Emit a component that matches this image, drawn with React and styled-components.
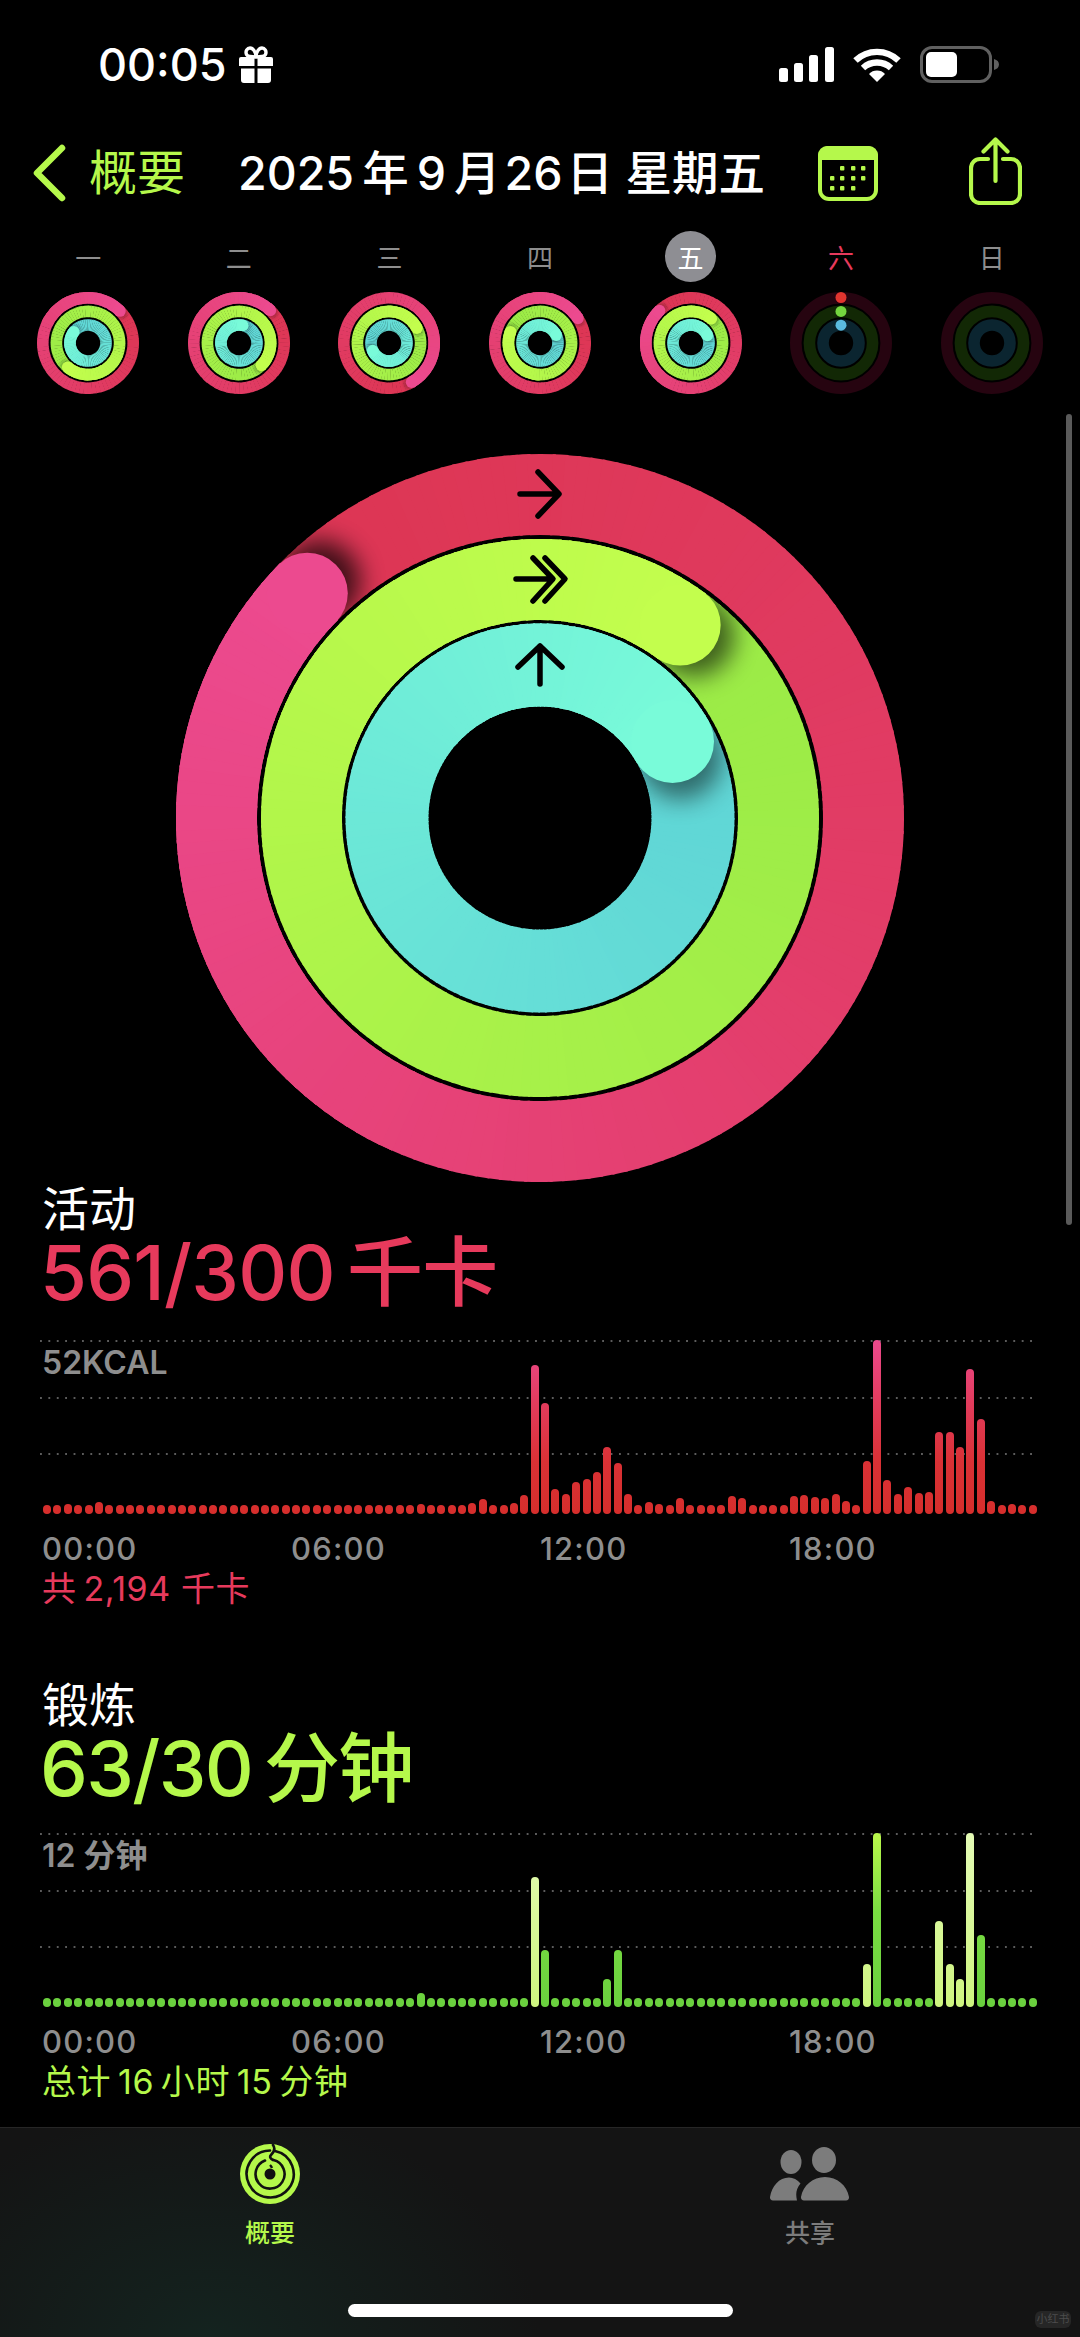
import { useId } from "react"
import styled, { createGlobalStyle } from "styled-components"

const GREEN = "#B5F84B"
const RED = "#E73A5C"
const GREY = "#8E8E8E"
const SANS = `Inter, "Noto Sans CJK SC", sans-serif`

const GlobalStyle = createGlobalStyle`
  html, body {
    margin: 0;
    padding: 0;
    background: #000;
    font-family: ${SANS};
  }
`

const Page = styled.div`
  position: relative;
  width: 1080px;
  height: 2337px;
  overflow: hidden;
  display: flex;
  flex-direction: column;
  background: #000;
  color: #fff;
`
const Content = styled.div`
  flex: 1;
  min-height: 0;
`
const StatusBar = styled.div`
  height: 128px;
  padding: 0 81px 0 98px;
  box-sizing: border-box;
  display: flex;
  align-items: center;
  justify-content: space-between;
`
const StatusLeft = styled.div`
  display: flex;
  align-items: center;
  gap: 12px;
`
const Time = styled.span`
  font-size: 45px;
  line-height: 1;
  font-weight: 500;
`
const StatusRight = styled.div`
  display: flex;
  align-items: center;
  gap: 19px;
`
const Nav = styled.div`
  height: 90px;
  padding-left: 31px;
  display: flex;
  align-items: center;
`
const BackLabel = styled.span`
  margin-left: 22px;
  width: 149px;
  font-size: 48px;
  color: ${GREEN};
  line-height: 1;
`
const DateTitle = styled.span`
  width: 580px;
  font-size: 46.5px;
  font-weight: 500;
  line-height: 1;
  white-space: pre;
`
const ShareButton = styled.span`
  display: flex;
  margin: 0 0 5px 91px;
`
const WeekRow = styled.div`
  margin-top: 13px;
  padding: 0 13px;
  display: grid;
  grid-template-columns: repeat(7, 1fr);
`
const Day = styled.div`
  display: flex;
  flex-direction: column;
  align-items: center;
  gap: 10px;
`
const DayLabel = styled.span`
  width: 51px;
  height: 51px;
  border-radius: 50%;
  display: flex;
  align-items: center;
  justify-content: center;
  font-size: 26px;
  background: ${p => (p.$today ? "#8E8E93" : "transparent")};
  color: ${p => (p.$today ? "#fff" : p.$weekend ? RED : GREY)};
`
const Hero = styled.div`
  margin-top: 60px;
  display: flex;
  justify-content: center;
`
const Section = styled.section`
  height: 496px;
  padding-left: 42px;
  &:first-of-type {
    margin-top: 2px;
  }
`
const SectionTitle = styled.div`
  font-size: 47px;
  line-height: 50px;
`
const BigValue = styled.div`
  margin-left: -2px;
  font-size: 76px;
  line-height: 76px;
  font-weight: 500;
  letter-spacing: ${p => p.$track}px;
  color: ${p => p.$color};
  white-space: pre;
`
const ChartArea = styled.div`
  position: relative;
  margin: ${p => p.$gap}px 0 0 -2px;
  width: 996px;
  height: 174px;
`
const GridLines = styled.div`
  position: absolute;
  inset: 0 0 auto 0;
  height: 115px;
  display: flex;
  flex-direction: column;
  justify-content: space-between;
`
const GridLine = styled.div`
  height: 2px;
  background-image: linear-gradient(to right, #5c5c5c 2px, transparent 2px);
  background-size: 8.4px 2px;
`
const ChartValue = styled.span`
  position: absolute;
  left: 2px;
  top: 5px;
  font-size: 32px;
  line-height: 36px;
  font-weight: 600;
  color: ${GREY};
`
const Bars = styled.div`
  position: relative;
  height: 100%;
  margin: 0 -1px 0 3px;
  display: flex;
  align-items: flex-end;
  justify-content: space-between;
`
const barFill = {
  red: "linear-gradient(to top, #D62E2C, #DA3135 30%, #E23C5E 65%, #EC4A8E)",
  green: "linear-gradient(to top, #6AD03E, #7ADD42 55%, #BAF84B)",
  pale: "linear-gradient(to top, #CEF57F, #E4FBB5)",
}
const Bar = styled.div`
  width: 8px;
  border-radius: 4px;
  background-image: ${p => barFill[p.$tone]};
  background-size: 100% 174px;
  background-position: bottom;
  background-repeat: no-repeat;
`
const TimeAxis = styled.div`
  margin-top: 17px;
  display: flex;
`
const TimeTick = styled.span`
  width: 249px;
  font-size: 31px;
  line-height: 36px;
  letter-spacing: 1.2px;
  font-weight: 500;
  color: ${GREY};
`
const Total = styled.div`
  margin-top: 2px;
  font-size: 34px;
  line-height: 40px;
  letter-spacing: 0.6px;
  color: ${p => p.$color};
  white-space: pre;
`
const TabBar = styled.div`
  height: 210px;
  flex: none;
  display: flex;
  flex-direction: column;
  box-sizing: border-box;
  border-top: 1px solid #262626;
  background:
    radial-gradient(ellipse 330px 230px at 210px 100%, #14231f 0%, rgba(20, 35, 31, 0) 100%),
    #141414;
`
const Tabs = styled.div`
  padding-top: 16px;
  display: grid;
  grid-template-columns: 1fr 1fr;
`
const Tab = styled.div`
  display: flex;
  flex-direction: column;
  align-items: center;
  color: ${p => (p.$active ? GREEN : "#7C7C7C")};
`
const TabIcon = styled.div`
  height: 60px;
  display: flex;
  align-items: center;
`
const TabLabel = styled.span`
  margin-top: 12px;
  font-size: 25px;
  line-height: 34px;
  font-weight: 500;
`
const HomeIndicator = styled.div`
  margin-top: 54px;
  align-self: center;
  width: 385px;
  height: 13px;
  border-radius: 7px;
  background: #fff;
`
const Scrollbar = styled.div`
  position: absolute;
  left: 1066px;
  top: 414px;
  width: 6px;
  height: 811px;
  border-radius: 3px;
  background: #5a5a5a;
`
const Watermark = styled.span`
  position: absolute;
  right: 9px;
  bottom: 9px;
  width: 36px;
  height: 17px;
  border-radius: 6px;
  background: #262626;
  color: #4c4c4c;
  font-size: 11px;
  line-height: 17px;
  text-align: center;
`

const point = (deg, r) => {
  const a = (deg * Math.PI) / 180
  return [r * Math.sin(a), -r * Math.cos(a)]
}
const mix = (a, b, t) => {
  const c = [1, 3, 5].map(i => {
    const x = parseInt(a.slice(i, i + 2), 16)
    const y = parseInt(b.slice(i, i + 2), 16)
    return Math.round(x + (y - x) * t)
  })
  return `rgb(${c.join(",")})`
}

const Arc = ({ r, width, start, sweep, color }) => {
  const [x0, y0] = point(start, r)
  const [x1, y1] = point(start + sweep, r)
  return <path d={`M${x0} ${y0}A${r} ${r} 0 0 1 ${x1} ${y1}`} fill="none" stroke={color} strokeWidth={width} />
}

const COLORS = {
  red: ["#DD3654", "#EC4A8F"],
  green: ["#9BEB47", "#C3FE4D"],
  cyan: ["#5FD5D6", "#79FBD9"],
}

// one progress ring: colour runs clockwise from just past the cap round to the cap
const Ring = ({ r, width, end, tone, steps, id, shade }) => {
  const [from, to] = COLORS[tone]
  const outer = r + width / 2
  const inner = r - width / 2
  const step = 360 / steps
  const parts = Array.from({ length: steps }, (_, i) => (
    <Arc key={i} r={r} width={width} start={end + i * step} sweep={step + 0.5} color={mix(from, to, Math.pow(i / (steps - 1), 1.3))} />
  ))
  const [cx, cy] = point(end, r)
  const nudge = ((width * 0.22) / r) * (180 / Math.PI)
  const [sx, sy] = point(end + nudge, r)
  const clip = `M${-outer} 0A${outer} ${outer} 0 1 0 ${outer} 0A${outer} ${outer} 0 1 0 ${-outer} 0Z
    M${-inner} 0A${inner} ${inner} 0 1 0 ${inner} 0A${inner} ${inner} 0 1 0 ${-inner} 0Z`
  return (
    <g>
      <defs>
        <clipPath id={`${id}c`}>
          <path d={clip} clipRule="evenodd" />
        </clipPath>
        <filter id={`${id}b`} x="-60%" y="-60%" width="220%" height="220%">
          <feGaussianBlur stdDeviation={width * 0.15} />
        </filter>
      </defs>
      {parts}
      <g clipPath={`url(#${id}c)`}>
        <circle cx={sx} cy={sy} r={width / 2} fill="#000" opacity={shade} filter={`url(#${id}b)`} />
      </g>
      {parts.slice(Math.floor(steps * 0.7))}
      <circle cx={cx} cy={cy} r={width / 2} fill={to} />
    </g>
  )
}

const HeroRings = () => {
  const id = useId()
  return (
    <svg width="728" height="728" viewBox="-364 -364 728 728">
      <Ring id={`${id}r`} r={323.5} width={81} end={314} tone="red" steps={180} shade={0.72} />
      <Ring id={`${id}g`} r={238.5} width={81} end={36} tone="green" steps={180} shade={0.6} />
      <Ring id={`${id}y`} r={153} width={83} end={60} tone="cyan" steps={180} shade={0.5} />
      <g fill="none" stroke="#000" strokeWidth="5.5" strokeLinecap="round" strokeLinejoin="round">
        <path d="M-20 -324H17M-2 -346L19 -324L-2 -302" />
        <path d="M-24 -239H11M-7 -260L13 -239L-7 -217M5 -260L25 -239L5 -217" />
        <path d="M0 -134V-172M-22 -151L0 -172L22 -151" />
      </g>
    </svg>
  )
}

const MiniRings = ({ ends, id }) => (
  <svg width="102" height="102" viewBox="-51 -51 102 102">
    <Ring id={`${id}r`} r={45.2} width={11.6} end={ends[0]} tone="red" steps={72} shade={0.22} />
    <Ring id={`${id}g`} r={31.6} width={11.6} end={ends[1]} tone="green" steps={72} shade={0.22} />
    <Ring id={`${id}y`} r={18} width={11.6} end={ends[2]} tone="cyan" steps={72} shade={0.22} />
  </svg>
)

const EmptyRings = ({ dots }) => (
  <svg width="102" height="102" viewBox="-51 -51 102 102" fill="none">
    <circle r={45.2} stroke="#260410" strokeWidth="11.6" />
    <circle r={31.6} stroke="#122805" strokeWidth="11.6" />
    <circle r={18} stroke="#0B2530" strokeWidth="11.6" />
    {dots && (
      <>
        <circle cy={-45.5} r="5.5" fill="#E0352F" />
        <circle cy={-31.6} r="5.5" fill="#74D53F" />
        <circle cy={-17.8} r="5.5" fill="#5ABBE0" />
      </>
    )}
  </svg>
)

const GiftIcon = () => (
  <svg width="34" height="37" viewBox="0 0 34 37">
    <path d="M17 11C14 11 8.5 11 7.5 8.5C6 5 8.5 2 11 2C14 2 17 6 17 11C17 6 20 2 23 2C25.5 2 28 5 26.5 8.5C25.5 11 20 11 17 11Z" fill="none" stroke="#fff" strokeWidth="3.4" />
    <path d="M2 11H15.5V20H0V13A2 2 0 0 1 2 11ZM18.5 11H32A2 2 0 0 1 34 13V20H18.5ZM2 22.5H15.5V37H5A3 3 0 0 1 2 34ZM18.5 22.5H32V34A3 3 0 0 1 29 37H18.5Z" fill="#fff" />
  </svg>
)
const SignalIcon = () => (
  <svg width="55" height="35" viewBox="0 0 55 35" fill="#fff">
    <rect x="0" y="21" width="9" height="14" rx="2.5" />
    <rect x="15" y="16" width="9" height="19" rx="2.5" />
    <rect x="30" y="8" width="9" height="27" rx="2.5" />
    <rect x="46" y="0" width="9" height="35" rx="2.5" />
  </svg>
)
const WifiIcon = () => (
  <svg width="48" height="35" viewBox="0 0 48 35" fill="none" stroke="#fff" strokeWidth="6.4">
    <path d="M2.5 13.5A31 31 0 0 1 45.5 13.5" />
    <path d="M10 21A20.5 20.5 0 0 1 38 21" />
    <path d="M16 27L24 35L32 27A11 11 0 0 0 16 27Z" fill="#fff" stroke="none" />
  </svg>
)
const BatteryIcon = () => (
  <svg width="79" height="37" viewBox="0 0 79 37">
    <rect x="1.5" y="1.5" width="69" height="34" rx="10.5" fill="none" stroke="#606060" strokeWidth="3" />
    <rect x="6" y="6" width="31" height="25" rx="5" fill="#fff" />
    <path d="M74 13A8 6 0 0 1 79 18.5A8 6 0 0 1 74 24Z" fill="#606060" />
  </svg>
)
const BackIcon = () => (
  <svg width="36" height="60" viewBox="0 0 36 60" fill="none" stroke={GREEN} strokeWidth="6.5" strokeLinecap="round" strokeLinejoin="round">
    <path d="M31 5L6 30L31 55" />
  </svg>
)
const CalendarIcon = () => {
  const dots = [[24, 22], [35, 22], [45, 22], [14, 32], [24, 32], [35, 32], [45, 32], [14, 42], [24, 42], [35, 42]]
  return (
    <svg width="60" height="55" viewBox="0 0 60 55">
      <rect x="2" y="2" width="56" height="51" rx="9" fill="none" stroke={GREEN} strokeWidth="4" />
      <path d="M9 0H51A9 9 0 0 1 60 9V14H0V9A9 9 0 0 1 9 0Z" fill={GREEN} />
      {dots.map(([x, y]) => (
        <rect key={`${x}-${y}`} x={x - 2} y={y - 2} width="4.4" height="4.4" rx="1" fill={GREEN} />
      ))}
    </svg>
  )
}
const ShareIcon = () => (
  <svg width="53" height="68" viewBox="0 0 53 68" fill="none" stroke={GREEN} strokeWidth="4.2" strokeLinecap="round" strokeLinejoin="round">
    <path d="M19 22H11A9 9 0 0 0 2 31V57A9 9 0 0 0 11 66H42A9 9 0 0 0 51 57V31A9 9 0 0 0 42 22H34" />
    <path d="M26.5 44V3M14.5 14.5L26.5 2.5L38.5 14.5" />
  </svg>
)
const ActivityTabIcon = () => (
  <svg width="60" height="60" viewBox="-30 -30 60 60">
    <circle r="30" fill={GREEN} />
    <g fill="none" stroke="#111" strokeWidth="2.6" strokeLinecap="round">
      <path d="M5 -23A23.5 23.5 0 1 1 0 -23.5" />
      <path d="M3 -29C6 -25 3 -21 1 -19C-1 -17 1 -15 3 -14" />
      <path d="M3.5 -14A14.5 14.5 0 1 1 -5 -13.5" />
    </g>
    <circle r="5.5" fill="#111" />
    <path d="M0 -9A9 9 0 0 1 2 -6" fill="none" stroke="#111" strokeWidth="2.4" />
  </svg>
)
const SharingTabIcon = () => (
  <svg width="80" height="54" viewBox="0 0 80 54" fill="currentColor">
    <ellipse cx="54" cy="13" rx="12" ry="13" />
    <ellipse cx="21" cy="15" rx="10.5" ry="12" />
    <path d="M34 53.5H76A3 3 0 0 0 79 50C77 38.500 67 30 55 30C43 30 33 38.500 31 50A3 3 0 0 0 34 53.500Z" />
    <path d="M3 53.500H27C25.500 47 26 42 30.500 36.500C27.500 32.500 23 30.500 19 30.500C9 30.500 2 39 0 50A3 3 0 0 0 3 53.500Z" />
  </svg>
)

const withPeaks = peaks => {
  const list = Array(96).fill(9)
  Object.entries(peaks).forEach(([i, h]) => {
    list[i] = h
  })
  return list
}

const energyBars = withPeaks({ 2: 10, 5: 12, 36: 10, 41: 11, 42: 15 })
;[
  9, 11, 19, 149, 111, 25, 20, 32, 35, 42, 67, 51, 20, 9, 12, 10, 9, 16, 9, 9, 9, 9, 18, 16, 9, 9,
  9, 9, 18, 19, 17, 16, 20, 13, 9, 53, 174, 34, 20, 27, 21, 22, 82, 82, 67, 145, 95, 13, 9, 10, 9, 9,
].forEach((h, i) => {
  energyBars[44 + i] = h
})

const exerciseBars = withPeaks({ 36: 14, 47: 130, 48: 57, 54: 28, 55: 57, 79: 43, 80: 174, 86: 86, 87: 43, 88: 28, 89: 174, 90: 72 })
const paleBars = [47, 79, 86, 87, 88, 89]

const ticks = ["00:00", "06:00", "12:00", "18:00"]

const week = [
  { label: "一", ends: [45, 220, 308] },
  { label: "二", ends: [44, 135, 12] },
  { label: "三", ends: [150, 62, 245] },
  { label: "四", ends: [57, 291, 64] },
  { label: "五", ends: [316, 40, 65], today: true },
  { label: "六", weekend: true, dots: true },
  { label: "日" },
]

const Chart = ({ bars, value, toneOf, gap }) => (
  <>
    <ChartArea $gap={gap}>
      <GridLines>
        <GridLine />
        <GridLine />
        <GridLine />
      </GridLines>
      <ChartValue>{value}</ChartValue>
      <Bars>
        {bars.map((h, i) => (
          <Bar key={i} $tone={toneOf(i)} style={{ height: h }} />
        ))}
      </Bars>
    </ChartArea>
    <TimeAxis>
      {ticks.map(t => (
        <TimeTick key={t}>{t}</TimeTick>
      ))}
    </TimeAxis>
  </>
)

const App = () => {
  return (
    <Page>
      <GlobalStyle />
      <Content>
        <StatusBar>
          <StatusLeft>
            <Time>00:05</Time>
            <GiftIcon />
          </StatusLeft>
          <StatusRight>
            <SignalIcon />
            <WifiIcon />
            <BatteryIcon />
          </StatusRight>
        </StatusBar>
        <Nav>
          <BackIcon />
          <BackLabel>概要</BackLabel>
          <DateTitle>{"2025\u2009年\u20099\u2009月\u200a26\u200a日 星期五"}</DateTitle>
          <CalendarIcon />
          <ShareButton>
            <ShareIcon />
          </ShareButton>
        </Nav>
        <WeekRow>
          {week.map(d => (
            <Day key={d.label}>
              <DayLabel $today={d.today} $weekend={d.weekend}>{d.label}</DayLabel>
              {d.ends ? <MiniRings ends={d.ends} id={`d${d.label}`} /> : <EmptyRings dots={d.dots} />}
            </Day>
          ))}
        </WeekRow>
        <Hero>
          <HeroRings />
        </Hero>
        <Section>
          <SectionTitle>活动</SectionTitle>
          <BigValue $color={RED} $track={-0.8}>{"561/300\u2009千卡"}</BigValue>
          <Chart bars={energyBars} value="52KCAL" toneOf={() => "red"} gap={30} />
          <Total $color={RED}>{"共\u20092,194 千卡"}</Total>
        </Section>
        <Section>
          <SectionTitle>锻炼</SectionTitle>
          <BigValue $color={GREEN} $track={-1.6}>{"63/30\u2009分钟"}</BigValue>
          <Chart bars={exerciseBars} value="12 分钟" toneOf={i => (paleBars.includes(i) ? "pale" : "green")} gap={27} />
          <Total $color={GREEN}>{"总计\u200916\u2009小时\u200915\u2009分钟"}</Total>
        </Section>
      </Content>
      <TabBar>
        <Tabs>
          <Tab $active>
            <TabIcon>
              <ActivityTabIcon />
            </TabIcon>
            <TabLabel>概要</TabLabel>
          </Tab>
          <Tab>
            <TabIcon>
              <SharingTabIcon />
            </TabIcon>
            <TabLabel>共享</TabLabel>
          </Tab>
        </Tabs>
        <HomeIndicator />
      </TabBar>
      <Scrollbar />
      <Watermark>小红书</Watermark>
    </Page>
  )
}

export default App
